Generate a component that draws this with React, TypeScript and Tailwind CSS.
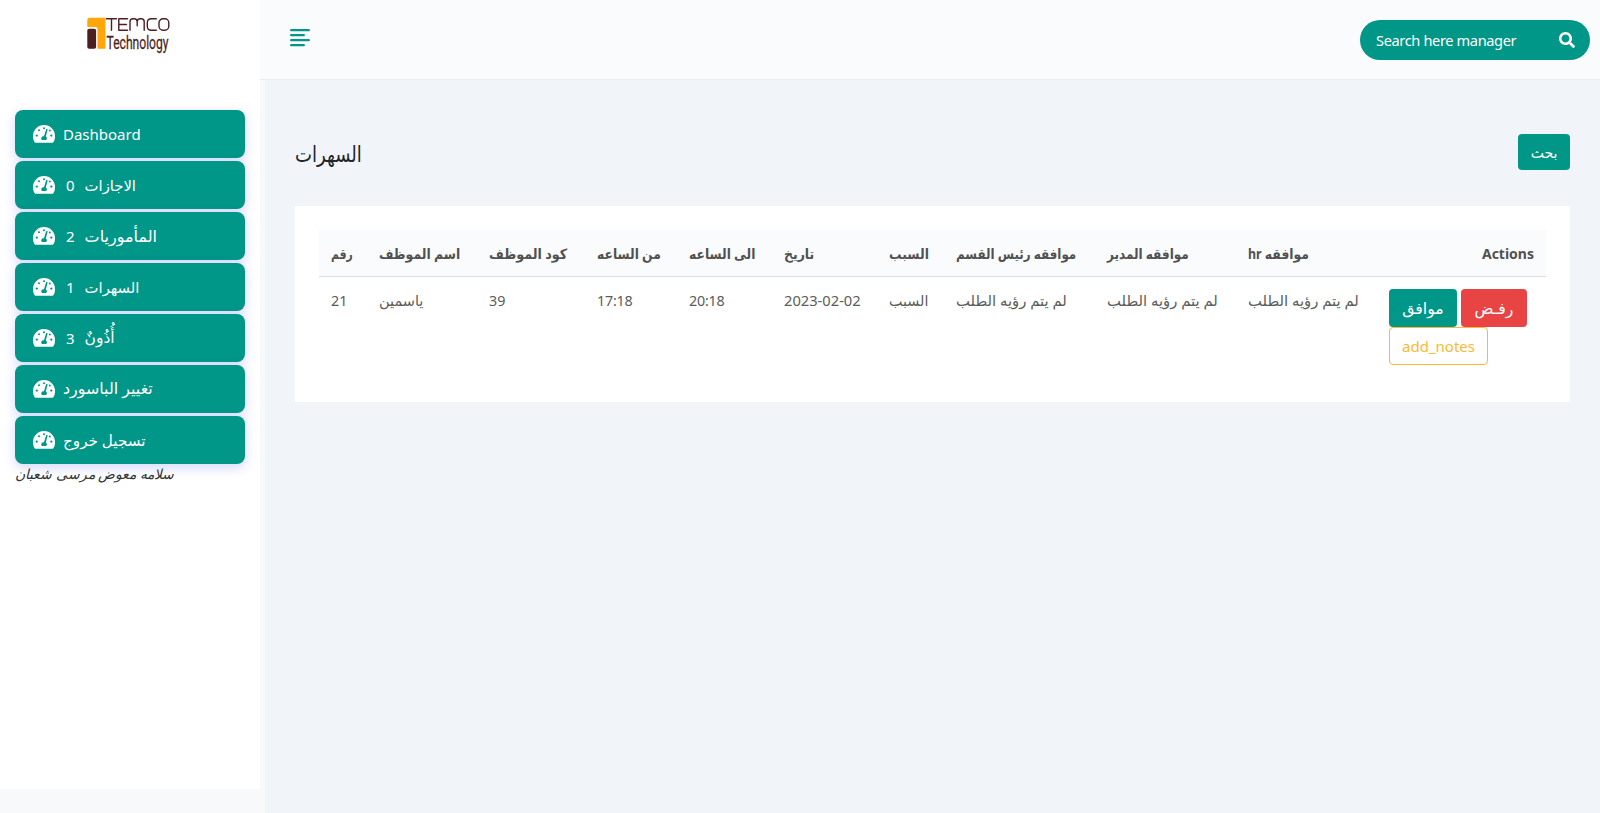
import { FaSearch } from "react-icons/fa";

function Gauge() {
  return (
    <svg viewBox="0 0 22 18" className="h-[18px] w-[22px] shrink-0" aria-hidden="true">
      <path fill="#fff" d="M11 0a11 11 0 0 0-11 11c0 2 .4 4 1.200 5.600.4.900.9 1.200 1.700 1.200h16.200c.8 0 1.300-.3 1.700-1.200A11 11 0 0 0 22 11 11 11 0 0 0 11 0z" />
      <g fill="#009688">
        <circle cx="11" cy="3.300" r="1" />
        <circle cx="6" cy="5.200" r="1" />
        <circle cx="3.800" cy="10.600" r="1.150" />
        <circle cx="16.800" cy="5.600" r="1" />
        <circle cx="18.300" cy="10.600" r="1.150" />
        <path d="M13.200 3.900l1.500.4-1.900 7.300a2.300 2.300 0 0 1 .3 3.500H9a2.200 2.200 0 0 1 2-3.800z" />
      </g>
    </svg>
  );
}

function Logo() {
  return (
    <svg viewBox="0 0 90 44" className="h-[44px] w-[90px] overflow-visible" role="img" aria-label="TEMCO Technology">
      <path fill="#ffa60a" d="M2.500.8H18.500v31h-8V12a2 2 0 0 0-2-2H.300V3A2.200 2.200 0 0 1 2.500.8z" />
      <rect x="0.300" y="11.800" width="8.800" height="20" rx="1.800" fill="#4d1f22" />
      <g fill="none" stroke="#4d1f22" strokeWidth="1.400" strokeLinecap="round" strokeLinejoin="round">
        <path d="M19.500 1.800h10M24.500 1.800v11.500" />
        <path d="M40.500 1.800h-8.700v11.500h8.700M31.800 7.500h7.700" />
        <path d="M43 13.300V4.800q0-3 3-3h1.200q3 0 3 3v4M50.200 4.800q0-3 3-3h1q3 0 3 3v8.500" />
        <path d="M69.300 1.800h-5q-4 0-4 4v3.500q0 4 4 4h5" />
        <rect x="72" y="1.800" width="9.800" height="11.500" rx="4" />
      </g>
      <text x="19.500" y="31.800" textLength="62" lengthAdjust="spacingAndGlyphs" fill="#4d1f22" stroke="#4d1f22" strokeWidth="0.300" className="font-['Roboto',sans-serif] text-[18.500px]">
        Technology
      </text>
    </svg>
  );
}

const menu = [
  { label: "Dashboard", size: "text-[15px]" },
  { count: "0", label: "الاجازات", size: "text-[14.8px]" },
  { count: "2", label: "المأموريات", size: "text-[16px]" },
  { count: "1", label: "السهرات", size: "text-[14.8px]" },
  { count: "3", label: "أُذُونٌ", size: "text-[15.5px]" },
  { label: "تغيير الباسورد", size: "text-[15.9px]" },
  { label: "تسجيل خروج", size: "text-[15.2px]" },
];

const columns = [
  { title: "رقم", value: "21", squeeze: "scale-x-[.77]", size: "pt-[14px] text-[14.3px]" },
  { title: "اسم الموظف", value: "ياسمين", squeeze: "scale-x-[.89]", size: "pt-[13px] text-[14.5px]" },
  { title: "كود الموظف", value: "39", squeeze: "scale-x-[.91]", size: "pt-[14px] text-[14.3px]" },
  { title: "من الساعه", value: "17:18", squeeze: "scale-x-[.88]", size: "pt-[14px] text-[14.3px] tracking-[-0.2px]" },
  { title: "الى الساعه", value: "20:18", squeeze: "scale-x-[.88]", size: "pt-[14px] text-[14.3px] tracking-[-0.2px]" },
  { title: "تاريخ", value: "2023-02-02", squeeze: "scale-x-[.89]", size: "pt-[13px] text-[14.7px]" },
  { title: "السبب", value: "السبب", squeeze: "scale-x-[.89]", size: "pt-[14px] text-[14.3px]" },
  { title: "موافقه رئيس القسم", value: "لم يتم رؤيه الطلب", squeeze: "scale-x-[.85]", size: "pt-[13px] text-[14.8px]" },
  { title: "موافقه المدير", value: "لم يتم رؤيه الطلب", squeeze: "scale-x-[.86]", size: "pt-[13px] text-[14.8px]" },
  { title: "موافقه hr", value: "لم يتم رؤيه الطلب", squeeze: "scale-x-[.885]", size: "pt-[13px] text-[14.8px]" },
];

const grid = "grid grid-cols-[48px_110px_108px_92px_95px_105px_67px_151px_141px_141px_169px]";

export default function App() {
  return (
    <div className="flex h-[813px] w-[1600px] overflow-hidden bg-[#f8f9fb] font-['Noto_Sans','DejaVu_Sans',sans-serif]">
      <aside className="h-[789px] w-[260px] shrink-0 bg-white px-[15px] pt-[17px]">
        <div className="flex h-[93px] pl-[72px]">
          <Logo />
        </div>
        <nav className="flex flex-col gap-[3px]">
          {menu.map((m) => (
            <a
              key={m.label}
              className="flex h-12 items-center rounded-lg bg-[#009688] pl-[18px] text-[15px] text-white shadow-[0_4px_12px_rgba(70,80,230,0.22)]"
            >
              <Gauge />
              {m.count && <span className="mr-[2px] ml-[11px]">{m.count}</span>}
              <span className={`ml-2 whitespace-nowrap ${m.size}`}>{m.label}</span>
            </a>
          ))}
        </nav>
        <p className="text-[13.9px] leading-5 text-[#333] italic">سلامه معوض مرسى شعبان</p>
      </aside>

      <div className="flex flex-1 flex-col">
        <header className="flex h-20 shrink-0 items-start justify-between border-b border-[#eceef1] bg-[#fafbfd] pr-[10px] pl-[30px]">
          <svg viewBox="0 0 20 18" className="mt-[29px] h-[18px] w-5" aria-hidden="true">
            <path d="M1.200 1.200h17.600M1.200 6.200h12.600M1.200 11.200h17.600M1.200 16.200h12.600" stroke="#009688" strokeWidth="2.300" strokeLinecap="round" />
          </svg>
          <div className="mt-5 flex h-10 w-[230px] items-center justify-between rounded-full bg-[#009688] pr-[15px] pl-4 text-white">
            <span className="pt-px text-[14.6px] tracking-[-0.37px]">Search here manager</span>
            <FaSearch className="size-4" />
          </div>
        </header>

        <main className="ml-[5px] flex-1 bg-[#f1f5fa] px-[30px] pt-[54px]">
          <div className="flex h-[72px] justify-between">
            <h1 className="origin-left scale-x-[.82] pt-[3px] text-[22px] text-[#212529]">السهرات</h1>
            <button className="h-9 w-[52px] rounded bg-[#009688] text-[14px] text-white">بحث</button>
          </div>

          <section className="h-[196px] bg-white px-[24px] pt-6 text-[14px] text-[#5c5c5c]">
            <div className={`${grid} h-[47px] w-[1227px] items-center border-b border-[#dbdfe4] bg-[#fafbfd] font-bold text-[#515151]`}>
              {columns.map((c) => (
                <div key={c.title} className="pl-3 whitespace-nowrap">
                  <span dir="rtl" className={`inline-block origin-left ${c.squeeze}`}>{c.title}</span>
                </div>
              ))}
              <div className="pr-3 text-right">Actions</div>
            </div>
            <div className={grid}>
              {columns.map((c) => (
                <div key={c.title} className={`pl-3 leading-5 whitespace-nowrap ${c.size}`}>{c.value}</div>
              ))}
              <div className="flex flex-wrap content-start gap-x-1 pt-3 pl-3">
                <button className="h-[38px] w-[68px] rounded bg-[#009688] pt-[2px] text-[15.7px] text-white">موافق</button>
                <button className="h-[38px] w-[66px] rounded bg-[#e94444] pt-[2px] text-[15.7px] text-white">رفـض</button>
                <button className="h-[38px] w-[99px] rounded border border-[#feb834] text-[15px] text-[#feb834]">add_notes</button>
              </div>
            </div>
          </section>
        </main>
      </div>
    </div>
  );
}
